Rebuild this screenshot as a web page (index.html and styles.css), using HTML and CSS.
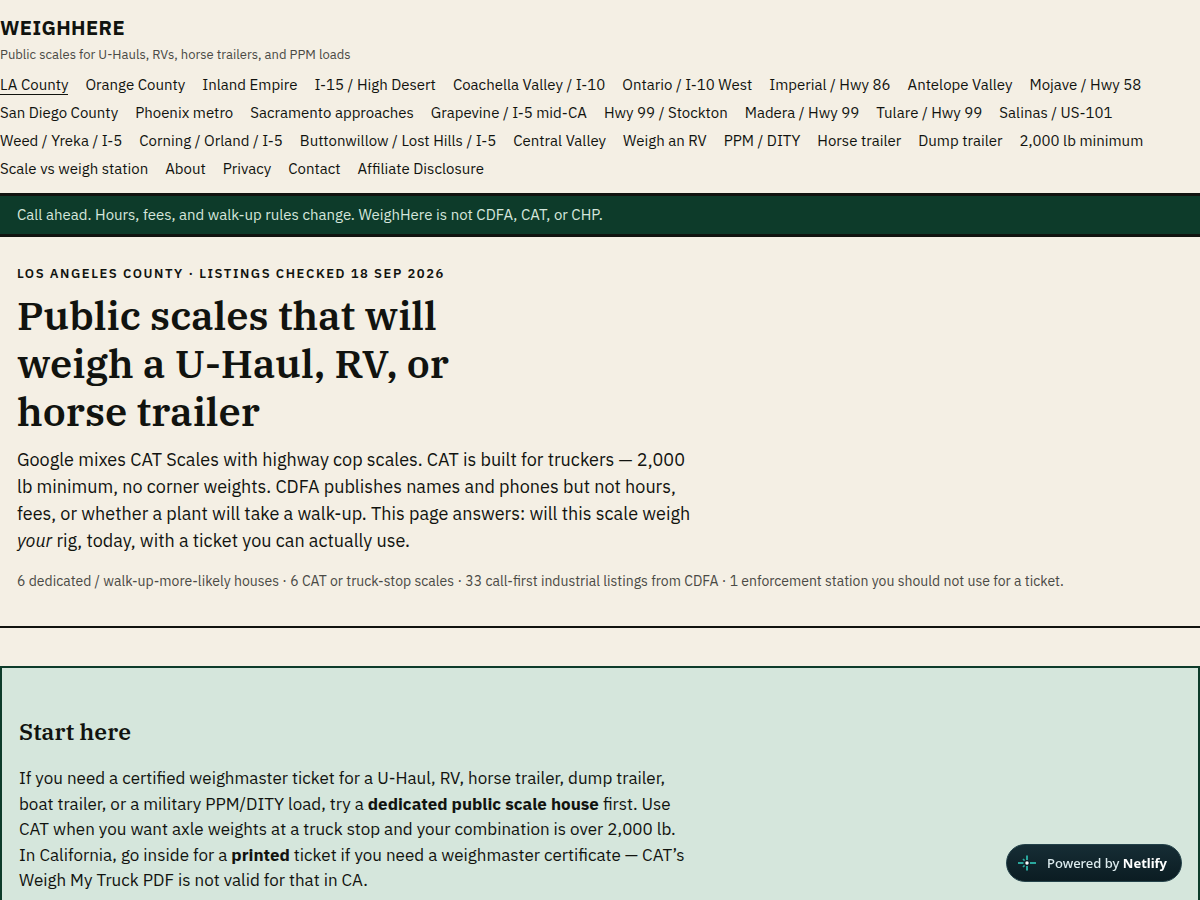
FILE: index.html
```
<!DOCTYPE html>
<html lang="en">
<head>
<meta charset="utf-8">
<meta name="viewport" content="width=device-width, initial-scale=1">
<title>WeighHere</title>
<link rel="stylesheet" href="styles.css">
</head>
<body>
<header class="site-header">
  <a class="brand" href="#">WEIGHHERE</a>
  <p class="tagline">Public scales for U-Hauls, RVs, horse trailers, and PPM loads</p>
  <nav class="site-nav" aria-label="Main">
    <a class="current" href="#" aria-current="page">LA County</a>
    <a href="#">Orange County</a>
    <a href="#">Inland Empire</a>
    <a href="#">I-15 / High Desert</a>
    <a href="#">Coachella Valley / I-10</a>
    <a href="#">Ontario / I-10 West</a>
    <a href="#">Imperial / Hwy 86</a>
    <a href="#">Antelope Valley</a>
    <a href="#">Mojave / Hwy 58</a>
    <a href="#">San Diego County</a>
    <a href="#">Phoenix metro</a>
    <a href="#">Sacramento approaches</a>
    <a href="#">Grapevine / I-5 mid-CA</a>
    <a href="#">Hwy 99 / Stockton</a>
    <a href="#">Madera / Hwy 99</a>
    <a href="#">Tulare / Hwy 99</a>
    <a href="#">Salinas / US-101</a>
    <a href="#">Weed / Yreka / I-5</a>
    <a href="#">Corning / Orland / I-5</a>
    <a href="#">Buttonwillow / Lost Hills / I-5</a>
    <a href="#">Central Valley</a>
    <a href="#">Weigh an RV</a>
    <a href="#">PPM / DITY</a>
    <a href="#">Horse trailer</a>
    <a href="#">Dump trailer</a>
    <a href="#">2,000 lb minimum</a>
    <a href="#">Scale vs weigh station</a>
    <a href="#">About</a>
    <a href="#">Privacy</a>
    <a href="#">Contact</a>
    <a href="#">Affiliate Disclosure</a>
  </nav>
</header>
<p class="notice">Call ahead. Hours, fees, and walk-up rules change. WeighHere is not CDFA, CAT, or CHP.</p>
<main>
  <section class="hero">
    <p class="eyebrow">LOS ANGELES COUNTY · LISTINGS CHECKED 18 SEP 2026</p>
    <h1>Public scales that will weigh a U-Haul, RV, or horse trailer</h1>
    <p class="lead">Google mixes CAT Scales with highway cop scales. CAT is built for truckers — 2,000 lb minimum, no corner weights. CDFA publishes names and phones but not hours, fees, or whether a plant will take a walk-up. This page answers: will this scale weigh <em>your</em> rig, today, with a ticket you can actually use.</p>
    <p class="summary">6 dedicated / walk-up-more-likely houses · 6 CAT or truck-stop scales · 33 call-first industrial listings from CDFA · 1 enforcement station you should not use for a ticket.</p>
  </section>
  <section class="start">
    <h2>Start here</h2>
    <p>If you need a certified weighmaster ticket for a U-Haul, RV, horse trailer, dump trailer, boat trailer, or a military PPM/DITY load, try a <strong>dedicated public scale house</strong> first. Use CAT when you want axle weights at a truck stop and your combination is over 2,000 lb. In California, go inside for a <strong>printed</strong> ticket if you need a weighmaster certificate — CAT’s Weigh My Truck PDF is not valid for that in CA.</p>
  </section>
</main>
<a class="badge" href="#">
  <svg width="20" height="20" viewBox="0 0 20 20" aria-hidden="true">
    <g fill="none" stroke="#2aa79d" stroke-width="2">
      <path d="M10 2.500v4.500M10 13v4.500M1 10h5.500M13 10h6"/>
      <path d="M6 6l1.600 1.600M6 14l1.600-1.600" stroke-width="1.600"/>
    </g>
    <circle cx="10" cy="10" r="1.700" fill="#fff"/>
  </svg>
  <span>Powered by <strong>Netlify</strong></span>
</a>
</body>
</html>
```
FILE: styles.css
```
* { box-sizing: border-box; }
body {
  margin: 0;
  background: #f4efe4;
  color: #11130f;
  font-family: "IBM Plex Sans", Roboto, sans-serif;
  font-size: 17px;
  line-height: 1.5;
}
p, h1, h2 { margin: 0; }
a { color: inherit; text-decoration: none; }
h1, h2 { font-family: "IBM Plex Serif", "Liberation Serif", serif; font-weight: 600; }

.site-header { padding: 13px 0 13px; border-bottom: 3px solid #11130f; }
.brand { display: block; font-size: 20px; line-height: 30px; font-weight: 700; letter-spacing: 0.02em; }
.tagline { margin-top: 2px; color: #4a4a45; font-size: 13px; line-height: 20px; }
.site-nav { display: flex; flex-wrap: wrap; gap: 5px 17px; margin-top: 8px; font-size: 15px; line-height: 23px; }
.site-nav .current { height: 22px; border-bottom: 1px solid #11130f; }

.notice {
  padding: 8px 17px;
  background: #0d3b2a;
  color: #d5e6dc;
  border-bottom: 3px solid #11130f;
  font-size: 15px;
  line-height: 22px;
}

.hero { padding: 27px 17px 34px; border-bottom: 2px solid #11130f; }
.eyebrow { font-size: 13px; line-height: 20px; font-weight: 600; letter-spacing: 0.12em; }
.hero h1 { max-width: 480px; margin-top: 7px; font-size: 40px; line-height: 48px; }
.lead { max-width: 680px; margin-top: 11px; font-size: 18px; line-height: 27px; }
.summary { margin-top: 17px; color: #4a4a45; font-size: 14px; line-height: 21px; }

.start { margin-top: 38px; padding: 47px 17px; background: #d5e6dc; border: 2px solid #0d3b2a; }
.start h2 { font-size: 23px; line-height: 32px; }
.start p { max-width: 674px; margin-top: 19px; }

.badge {
  position: fixed;
  right: 18px;
  bottom: 18px;
  display: flex;
  align-items: center;
  gap: 10px;
  padding: 8px 14px 8px 10px;
  border: 1px solid #24424a;
  border-radius: 19px;
  background: linear-gradient(#162d35, #0b1c22);
  color: #dcebee;
  font: 500 13px/20px "Noto Sans", sans-serif;
}
.badge strong { color: #fff; }
```
